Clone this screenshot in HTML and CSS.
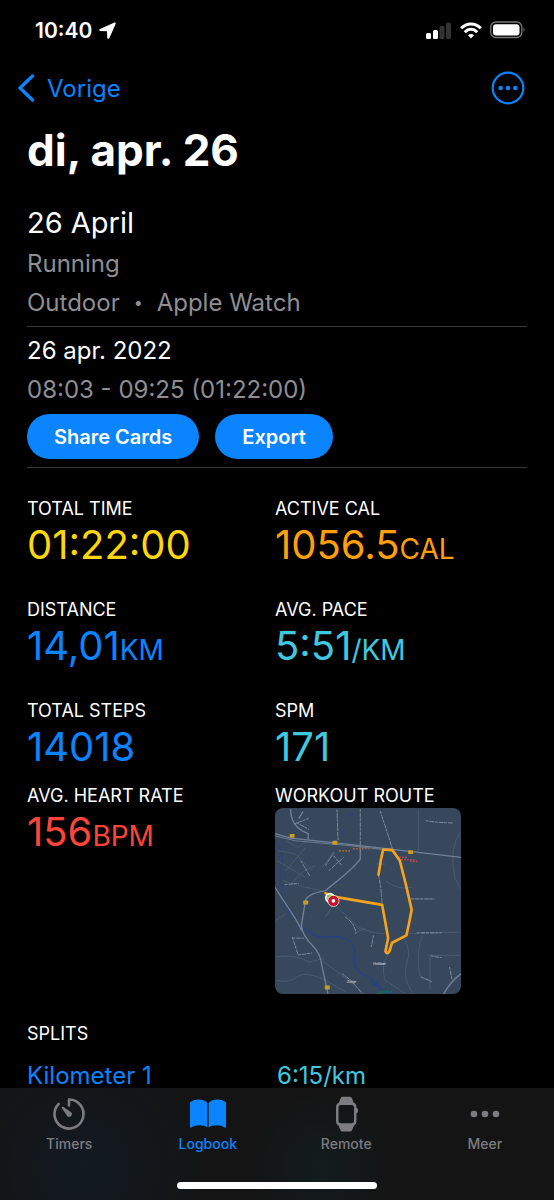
FILE: index.html
```html
<!DOCTYPE html>
<html lang="nl">
    <head>
        <meta charset="UTF-8" />
        <meta name="viewport" content="width=device-width, initial-scale=1.0" />
        <title>Logbook</title>
        <link rel="stylesheet" href="styles.css">
    </head>
    <body>
        <div class="app">
            <div class="status-bar">
                <div class="status-left">
                    <span>10:40</span>
                    <svg width="17" height="17" viewBox="0 0 17 17" fill="#fff" aria-hidden="true">
                        <path d="M15.500 0.500Q17.200 0.300 16.600 2L10.400 16Q9 17.800 8.200 15.800L8 9.300L1.300 9Q-0.800 8.300 1 7Z" />
                    </svg>
                </div>
                <div class="status-right">
                    <svg width="26" height="17" viewBox="0 0 26 17" aria-hidden="true">
                        <g fill="#fff"><rect x="0" y="11" width="5" height="6" rx="1.500" /><rect x="7" y="8" width="5" height="9" rx="1.500" /></g>
                        <g fill="#333"><rect x="13.500" y="4" width="5" height="13" rx="1.500" /><rect x="20" y="0.500" width="5" height="16.500" rx="1.500" /></g>
                    </svg>
                    <svg width="22" height="17" viewBox="0 0 22 17" fill="none" stroke="#fff" stroke-width="3" aria-hidden="true">
                        <path d="M1.200 6.300C6.500 0.500 15.500 0.500 20.800 6.300" />
                        <path d="M4.800 10.200C8.500 6.300 13.500 6.300 17.200 10.200" />
                        <path d="M8 13.200Q11 10.800 14 13.200L11 16.500Z" fill="#fff" stroke="none" />
                    </svg>
                    <svg width="36" height="18" viewBox="0 0 36 18" aria-hidden="true">
                        <rect x="0.800" y="1" width="31" height="15.500" rx="5" fill="none" stroke="#777" stroke-width="1.300" />
                        <rect x="3" y="3.200" width="26.500" height="11.200" rx="3" fill="#fff" />
                        <path d="M33.500 6.300Q35.500 8.800 33.500 11.300Z" fill="#888" />
                    </svg>
                </div>
            </div>

            <nav class="nav-bar">
                <a class="back" href="#">
                    <svg width="18" height="28" viewBox="0 0 18 28" fill="none" stroke="currentColor" stroke-width="3.300" stroke-linecap="round" stroke-linejoin="round" aria-hidden="true">
                        <path d="M15.500 2L3 14L15.500 26" />
                    </svg>
                    <span>Vorige</span>
                </a>
                <button class="more" aria-label="Meer opties">
                    <svg width="34" height="34" viewBox="0 0 34 34" fill="currentColor" aria-hidden="true">
                        <circle cx="17" cy="17" r="15.300" fill="none" stroke="currentColor" stroke-width="2.200" />
                        <circle cx="9.700" cy="17" r="2.300" />
                        <circle cx="17" cy="17" r="2.300" />
                        <circle cx="24.300" cy="17" r="2.300" />
                    </svg>
                </button>
            </nav>

            <main class="content">
                <h1>di, apr. 26</h1>

                <section class="workout">
                    <h2>26 April</h2>
                    <p>Running</p>
                    <p class="source"><span>Outdoor</span><span class="dot">•</span><span>Apple Watch</span></p>
                </section>

                <section class="session">
                    <p class="date">26 apr. 2022</p>
                    <p>08:03 - 09:25 (01:22:00)</p>
                    <div class="actions">
                        <button class="pill">Share Cards</button>
                        <button class="pill">Export</button>
                    </div>
                </section>

                <section class="stats">
                    <div class="stat">
                        <h3>TOTAL TIME</h3>
                        <p class="value yellow">01:22:00</p>
                    </div>
                    <div class="stat">
                        <h3>ACTIVE CAL</h3>
                        <p class="value orange">1056.5<small>CAL</small></p>
                    </div>
                    <div class="stat">
                        <h3>DISTANCE</h3>
                        <p class="value blue">14,01<small>KM</small></p>
                    </div>
                    <div class="stat">
                        <h3>AVG. PACE</h3>
                        <p class="value teal">5:51<small>/KM</small></p>
                    </div>
                    <div class="stat">
                        <h3>TOTAL STEPS</h3>
                        <p class="value blue">14018</p>
                    </div>
                    <div class="stat">
                        <h3>SPM</h3>
                        <p class="value teal">171</p>
                    </div>
                </section>

                <section class="stats heart">
                    <div class="stat">
                        <h3>AVG. HEART RATE</h3>
                        <p class="value red">156<small>BPM</small></p>
                    </div>
                    <div class="stat">
                        <h3>WORKOUT ROUTE</h3>
                        <svg class="map" viewBox="28 81 562 562" role="img" aria-label="Workout route">
                            <rect x="28" y="81" width="562" height="562" fill="#38485c" />
                            <!-- water -->
                            <g fill="none" stroke="#2a4084" stroke-width="4">
                                <path d="M28 180Q55 200 48 250T52 320Q40 350 68 390T110 440Q150 475 180 470T245 475Q275 500 268 530T290 580Q315 590 330 610T385 643" />
                                <path d="M245 105L265 98M225 160L240 150M215 308L232 303M93 233L100 238M230 390L240 397" stroke-width="3" />
                                <path d="M318 602L345 618L325 615L340 600" />
                            </g>
                            <!-- minor roads -->
                            <g fill="none" stroke="#52647a" stroke-width="2">
                                <path d="M460 85V210M590 150Q550 200 570 290L590 330M360 300Q400 330 440 320M440 355H510M415 470Q440 510 425 550T445 643M430 460L590 455M475 455Q450 520 465 590L500 605M490 525H590M495 530V630M280 440Q320 460 360 460M268 460L300 443M370 520Q345 560 360 600L420 640M28 530Q90 520 130 545L175 535M175 545L250 600L300 643M30 600Q70 610 95 590T180 600L240 635M60 400L30 420M175 335Q210 380 250 410L285 450M205 370L180 410M130 170L100 200L60 180M35 240L120 290M50 300L120 320L170 330M40 210L90 220L140 270M60 270L95 230L120 200M75 310L115 270L150 255M330 250H360M200 220L170 260" />
                            </g>
                            <g fill="none" stroke="#7c8b9c" stroke-width="3" stroke-dasharray="9 3 14 2">
                                <path d="M215 85L218 180M285 84V200M345 90L368 160L382 205M482 119Q510 125 565 126M340 285Q350 330 350 370M106 240L134 288M180 255L205 215M190 270L235 230M205 225L230 255M57 312L100 308M240 410Q270 430 272 460M325 465L318 500M80 470L98 524L140 518M80 473H115M438 355H508M455 457H530M497 527L530 532M554 560L562 600M468 590L500 604M230 580L260 603L290 640M85 130L130 112M92 125L130 145" />
                            </g>
                            <!-- main roads -->
                            <g fill="none" stroke="#708197" stroke-width="4">
                                <path d="M28 158L75 172L210 186L350 202L590 230" />
                                <path d="M28 165L90 180L240 193L360 207" stroke="#8896a8" stroke-width="2" />
                                <path d="M75 84Q75 140 128 158V175M100 113L112 92M285 200V235Q275 250 235 285L180 330Q125 340 120 360L108 430Q105 460 145 500Q165 520 170 560L188 643M28 320Q60 370 80 400T108 450M590 580Q560 600 535 643" />
                            </g>
                            <g fill="none" stroke-width="5" stroke-dasharray="5 4">
                                <path d="M222 210H258M263 204L312 203" stroke="#a4673d" />
                                <path d="M402 230H425M408 237H450M435 242H457" stroke="#b94758" />
                            </g>
                            <g fill="#c99c22">
                                <rect x="72" y="159" width="15" height="12" rx="2" />
                                <rect x="201" y="180" width="15" height="12" rx="2" />
                                <rect x="429" y="208" width="15" height="12" rx="2" />
                                <rect x="113" y="360" width="15" height="12" rx="2" />
                                <rect x="178" y="616" width="15" height="12" rx="2" />
                            </g>
                            <path d="M335 643Q355 630 380 637" fill="none" stroke="#17705d" stroke-width="7" stroke-dasharray="7 3" />
                            <!-- route -->
                            <path d="M340 282L347 238L354 206L382 208L404 239L422 310L440 388L430 438L424 465L381 487L373 512Q366 524 361 513L369 473L351 373L205 348L180 338" fill="none" stroke="#f6a21d" stroke-width="8" stroke-linejoin="round" stroke-linecap="round" />
                            <circle cx="194" cy="352" r="13" fill="#8bc34a" stroke="#fff" stroke-width="5" />
                            <circle cx="204" cy="361" r="11" fill="#fff" stroke="#d0102f" stroke-width="11" />
                            <circle cx="204" cy="361" r="17" fill="none" stroke="#fff" stroke-width="2" />
                            <text x="324" y="554">Holtber</text>
                            <text x="245" y="607">Zorte</text>
                        </svg>
                    </div>
                </section>

                <section class="splits">
                    <h3>SPLITS</h3>
                    <div class="split">
                        <span class="blue">Kilometer 1</span>
                        <span class="teal">6:15/km</span>
                    </div>
                </section>
            </main>

            <footer class="tab-bar">
                <nav class="tabs">
                    <a class="tab" href="#">
                        <svg width="36" height="36" viewBox="0 0 36 36" aria-hidden="true">
                            <path d="M18 9.500V3.500A14.500 14.500 0 1 1 7.700 7.800" fill="none" stroke="currentColor" stroke-width="2.600" stroke-linecap="round" stroke-linejoin="round" />
                            <path d="M10.500 11.500Q11 10.300 12.500 11L19.800 16A2.700 2.700 0 1 1 16 19.800Z" fill="currentColor" />
                        </svg>
                        <span>Timers</span>
                    </a>
                    <a class="tab active" href="#">
                        <svg width="36" height="36" viewBox="0 0 36 36" fill="currentColor" aria-hidden="true">
                            <path d="M17.300 7V31.500C14 28.500 5 28.500 1.500 31.500Q0 32.500 0 30.500V6.500C4 2.500 14 2.500 17.300 7Z" />
                            <path d="M18.700 7V31.500C22 28.500 31 28.500 34.500 31.500Q36 32.500 36 30.500V6.500C32 2.500 22 2.500 18.700 7Z" />
                        </svg>
                        <span>Logbook</span>
                    </a>
                    <a class="tab" href="#">
                        <svg width="36" height="36" viewBox="0 0 36 36" fill="currentColor" aria-hidden="true">
                            <path fill-rule="evenodd" d="M14.500 0.800H22Q23.500 0.800 24 2.300L25.500 6.500Q28.500 7.800 28.500 11V12Q30 12 30 13.500V15.500Q30 17 28.500 17V25.500Q28.500 28.700 25.800 30L24 34.300Q23.500 35.600 22 35.600H14.500Q13 35.600 12.500 34.300L10.700 30Q8 28.700 8 25.500V11Q8 7.800 11 6.500L12.500 2.300Q13 0.800 14.500 0.800ZM13 9Q10.500 9 10.500 11.500V25Q10.500 27.300 13 27.300H23.500Q26 27.300 26 25V11.500Q26 9 23.500 9Z" />
                        </svg>
                        <span>Remote</span>
                    </a>
                    <a class="tab" href="#">
                        <svg width="36" height="36" viewBox="0 0 36 36" fill="currentColor" aria-hidden="true">
                            <circle cx="7" cy="18" r="3.300" />
                            <circle cx="18" cy="18" r="3.300" />
                            <circle cx="29" cy="18" r="3.300" />
                        </svg>
                        <span>Meer</span>
                    </a>
                </nav>
                <div class="home-indicator"></div>
            </footer>
        </div>
    </body>
</html>
```
FILE: styles.css
```css
* {
    box-sizing: border-box;
}

body {
    margin: 0;
    background-color: #000;
    color: #fff;
    font-family: Inter, "Liberation Sans", sans-serif;
}

h1,
h2,
h3,
p {
    margin: 0;
    font-weight: 400;
}

a {
    text-decoration: none;
}

svg {
    display: block;
}

.app {
    display: flex;
    flex-direction: column;
    height: 100vh;
}

/* status bar */

.status-bar {
    display: flex;
    align-items: center;
    justify-content: space-between;
    height: 60px;
    padding: 0 28px 0 35px;
    font-size: 21px;
    font-weight: 600;
}

.status-left {
    display: flex;
    align-items: center;
    gap: 7px;
}

.status-right {
    display: flex;
    align-items: center;
    gap: 8px;
}

/* navigation */

.nav-bar {
    display: flex;
    align-items: center;
    justify-content: space-between;
    height: 56px;
    padding: 0 29px 0 17px;
}

.back {
    display: flex;
    align-items: center;
    gap: 12px;
    color: #0a84ff;
    font-size: 24px;
}

.more {
    padding: 0;
    border: 0;
    background: none;
    color: #0a84ff;
}

/* content */

.content {
    flex: 1;
    min-height: 0;
    padding: 0 27px;
    overflow: hidden;
}

h1 {
    font-size: 44px;
    line-height: 68px;
    font-weight: 700;
}

.workout,
.session {
    border-bottom: 1px solid #3a3a3c;
    color: #8e8e93;
    font-size: 24px;
    line-height: 39px;
}

.workout {
    padding: 18px 0 4px;
}

.workout h2 {
    color: #fff;
    font-size: 29px;
    line-height: 42px;
}

.source {
    display: flex;
    gap: 14px;
}

.dot {
    font-size: 16px;
}

.session {
    padding: 4px 0 8px;
}

.date {
    color: #fff;
}

.actions {
    display: flex;
    gap: 16px;
    padding-top: 5px;
}

.pill {
    height: 45px;
    padding: 0 27px;
    border: 0;
    border-radius: 23px;
    background-color: #0a84ff;
    color: #fff;
    font-family: inherit;
    font-size: 20px;
    font-weight: 600;
}

.stats {
    display: grid;
    grid-template-columns: 62fr 63fr;
    row-gap: 29px;
    padding-top: 29px;
}

.heart {
    padding-top: 13px;
}

h3 {
    font-size: 18px;
    line-height: 24px;
}

.value {
    font-size: 40px;
    line-height: 48px;
}

.value small {
    font-size: 28px;
    line-height: 28px;
}

.yellow {
    color: #ffd60a;
}

.orange {
    color: #ff9f0a;
}

.blue {
    color: #0a84ff;
}

.teal {
    color: #40c8e0;
}

.red {
    color: #ff453a;
}

.map {
    width: 74%;
    border-radius: 8px;
}

.map text {
    fill: #e4e8ee;
    font-size: 11px;
}

.splits {
    padding-top: 28px;
}

.split {
    display: grid;
    grid-template-columns: 1fr 1fr;
    padding-top: 10px;
    font-size: 24px;
    line-height: 39px;
}

/* tab bar */

.tab-bar {
    display: flex;
    flex-direction: column;
    align-items: center;
    justify-content: space-between;
    height: 112px;
    padding: 8px 0 11px;
    background-color: #141414;
    background-image: radial-gradient(circle at 15% 70%, #121a22, transparent 26%), radial-gradient(circle at 58% 70%, #131c1e, transparent 22%);
}

.tabs {
    display: grid;
    grid-template-columns: repeat(4, 1fr);
    width: 100%;
}

.tab {
    display: flex;
    flex-direction: column;
    align-items: center;
    gap: 3px;
    color: #7c7c80;
    font-size: 14px;
    line-height: 18px;
    font-weight: 500;
}

.tab.active {
    color: #0a84ff;
}

.home-indicator {
    width: 36%;
    height: 7px;
    border-radius: 4px;
    background-color: #fff;
}
```
